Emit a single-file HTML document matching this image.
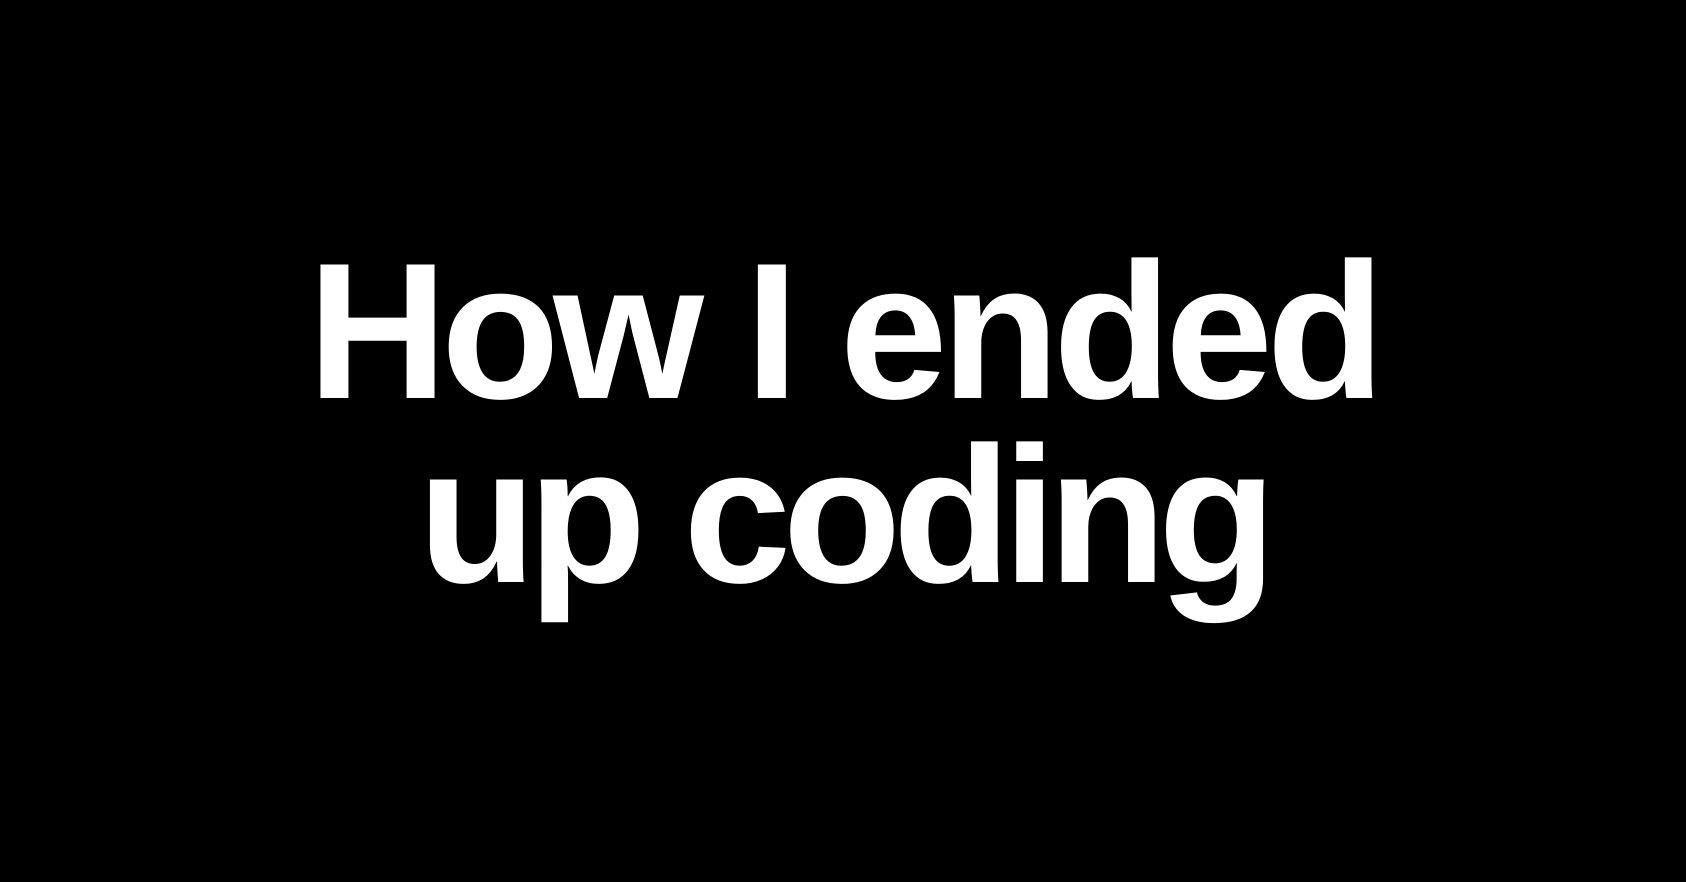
<!DOCTYPE html>
<html><head><meta charset="utf-8"><style>
html,body{margin:0;padding:0;background:#000;width:1686px;height:882px;overflow:hidden}
.l{position:absolute;left:0;width:1686px;text-align:center;color:#fff;font-family:"Liberation Sans",sans-serif;font-weight:bold;font-size:194px;line-height:194px;letter-spacing:-6.5px;white-space:nowrap}
</style></head><body>
<div class="l" style="top:235px">How I ended</div>
<div class="l" style="top:419px;letter-spacing:-8.5px">up coding</div>
</body></html>
